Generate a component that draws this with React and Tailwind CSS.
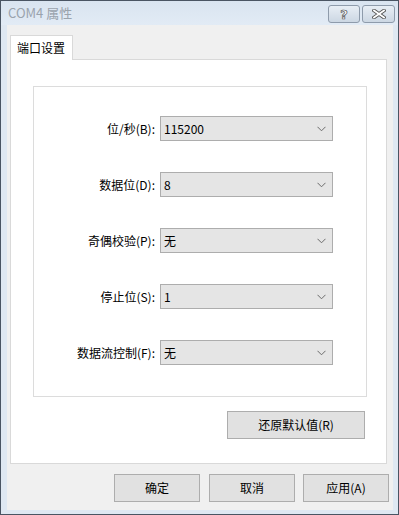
import React from 'react';

const FONT = { fontFamily: '"Noto Sans CJK SC", "Noto Sans", sans-serif' };

const rows = [
  { label: '位/秒(B):', value: '115200' },
  { label: '数据位(D):', value: '8' },
  { label: '奇偶校验(P):', value: '无' },
  { label: '停止位(S):', value: '1' },
  { label: '数据流控制(F):', value: '无' },
];

// 下拉框
const Combo = ({ value }) => (
  <div className="flex items-center justify-between w-[173px] h-[25px] bg-[#e5e5e5] border border-[#adadad] pl-[3px] pr-[6px]">
    <span className="text-[12px] leading-none text-black">{value}</span>
    <svg width="9" height="6" viewBox="0 0 9 6">
      <path d="M0.5 0.8 L4.5 4.8 L8.5 0.8" fill="none" stroke="#6b6b6b" strokeWidth="1" />
    </svg>
  </div>
);

const Button = ({ children, className = '' }) => (
  <button className={`h-[28px] bg-[#e1e1e1] border border-[#adadad] text-[12px] text-black leading-none ${className}`}>
    {children}
  </button>
);

export default function App() {
  return (
    <div className="w-[399px] h-[515px] border border-[#4a5563] bg-[#dfe8f2] flex flex-col" style={FONT}>
      {/* 标题栏 */}
      <div className="h-[24px] flex items-start bg-gradient-to-b from-[#d9e4f0] to-[#e2ebf5] relative">
        <span className="ml-[7px] mt-[5px] text-[13px] leading-none text-[#9aa3ad]">COM4 属性</span>
        <div className="absolute left-[327px] top-[4px] flex gap-[2px]">
          <div className="w-[32px] h-[18px] rounded-[3px] border border-[#8e9bab] bg-gradient-to-b from-[#e8eef5] to-[#ccd7e3] flex items-center justify-center">
            <span className="text-[13px] font-bold leading-none text-white [-webkit-text-stroke:0.7px_#555555]" style={{ fontFamily: '"DejaVu Sans", sans-serif' }}>?</span>
          </div>
          <div className="w-[33px] h-[18px] rounded-[3px] border border-[#8e9bab] bg-gradient-to-b from-[#e8eef5] to-[#ccd7e3] flex items-center justify-center">
            <svg width="14" height="10" viewBox="0 0 14 10">
              <path d="M2 1.5 L12 8.5 M12 1.5 L2 8.5" stroke="#555555" strokeWidth="3.6" strokeLinecap="square" />
              <path d="M2 1.5 L12 8.5 M12 1.5 L2 8.5" stroke="#ffffff" strokeWidth="1.8" strokeLinecap="square" />
            </svg>
          </div>
        </div>
      </div>

      {/* 客户区 */}
      <div className="ml-[6px] w-[386px] h-[485px] bg-[#f0f0f0] flex flex-col">
        {/* 选项卡 */}
        <div className="ml-[3px] mt-[10px] relative z-10 -mb-px w-[63px] h-[25px] bg-white border border-b-0 border-[#d9d9d9] flex items-center pl-[6px] pb-[1px] text-[12px] leading-none text-black">
          端口设置
        </div>
        <div className="ml-[3px] w-[377px] h-[405px] bg-white border border-[#d9d9d9] flex flex-col">
          {/* 分组框 */}
          <div className="ml-[22px] mt-[26px] w-[334px] h-[311px] border border-[#dcdcdc] flex flex-col gap-[31px] pt-[29px]">
            {rows.map((r) => (
              <div key={r.label} className="flex items-center">
                <span className="w-[121px] mr-[5px] text-right text-[12px] text-black leading-none">{r.label}</span>
                <Combo value={r.value} />
              </div>
            ))}
          </div>
          <Button className="ml-[216px] mt-[14px] w-[138px]">还原默认值(R)</Button>
        </div>

        {/* 底部按钮 */}
        <div className="flex mt-[10px] ml-[107px] gap-[9px]">
          <Button className="w-[86px]">确定</Button>
          <Button className="w-[86px]">取消</Button>
          <Button className="w-[86px] -ml-px">应用(A)</Button>
        </div>
      </div>
    </div>
  );
}
